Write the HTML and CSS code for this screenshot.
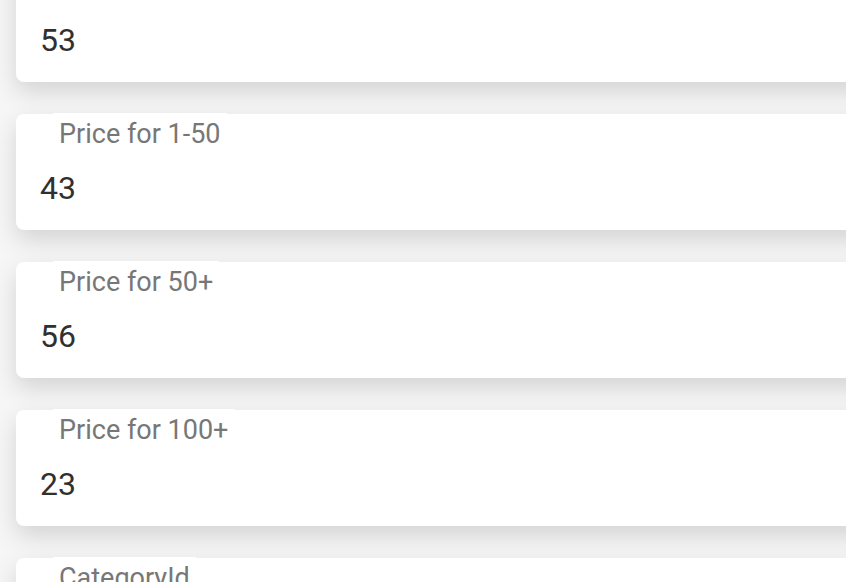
FILE: index.html
```html
<!DOCTYPE html>
<html>
<head>
<meta charset="utf-8">
<link rel="stylesheet" href="styles.css">
</head>
<body>
<div class="list">
  <div class="field">
    <span class="label">Price</span>
    <div class="value">53</div>
  </div>
  <div class="field">
    <span class="label">Price for 1-50</span>
    <div class="value">43</div>
  </div>
  <div class="field">
    <span class="label">Price for 50+</span>
    <div class="value">56</div>
  </div>
  <div class="field">
    <span class="label">Price for 100+</span>
    <div class="value">23</div>
  </div>
  <div class="field">
    <span class="label">CategoryId</span>
    <div class="value">1</div>
  </div>
</div>
</body>
</html>
```
FILE: styles.css
```css
html, body {
  margin: 0;
  padding: 0;
}
body {
  background: #f6f6f6;
  overflow: hidden;
  height: 582px;
  font-family: Roboto, "Liberation Sans", sans-serif;
}
.list {
  display: flex;
  flex-direction: column;
  gap: 32px;
  margin-top: -34px;
  padding-left: 16px;
  width: 920px;
}
.field {
  box-sizing: border-box;
  height: 116px;
  background: #fff;
  border-radius: 8px;
  box-shadow: 0 10px 24px rgba(0, 0, 0, 0.14);
  padding: 0 24px;
}
.label {
  display: inline-block;
  margin-top: -1px;
  margin-left: 13px;
  padding: 8px 6px 0;
  background: #fff;
  font-size: 27px;
  line-height: 1;
  color: #777;
}
.value {
  margin-top: 24px;
  font-size: 32px;
  line-height: 1;
  color: #303030;
}
```
